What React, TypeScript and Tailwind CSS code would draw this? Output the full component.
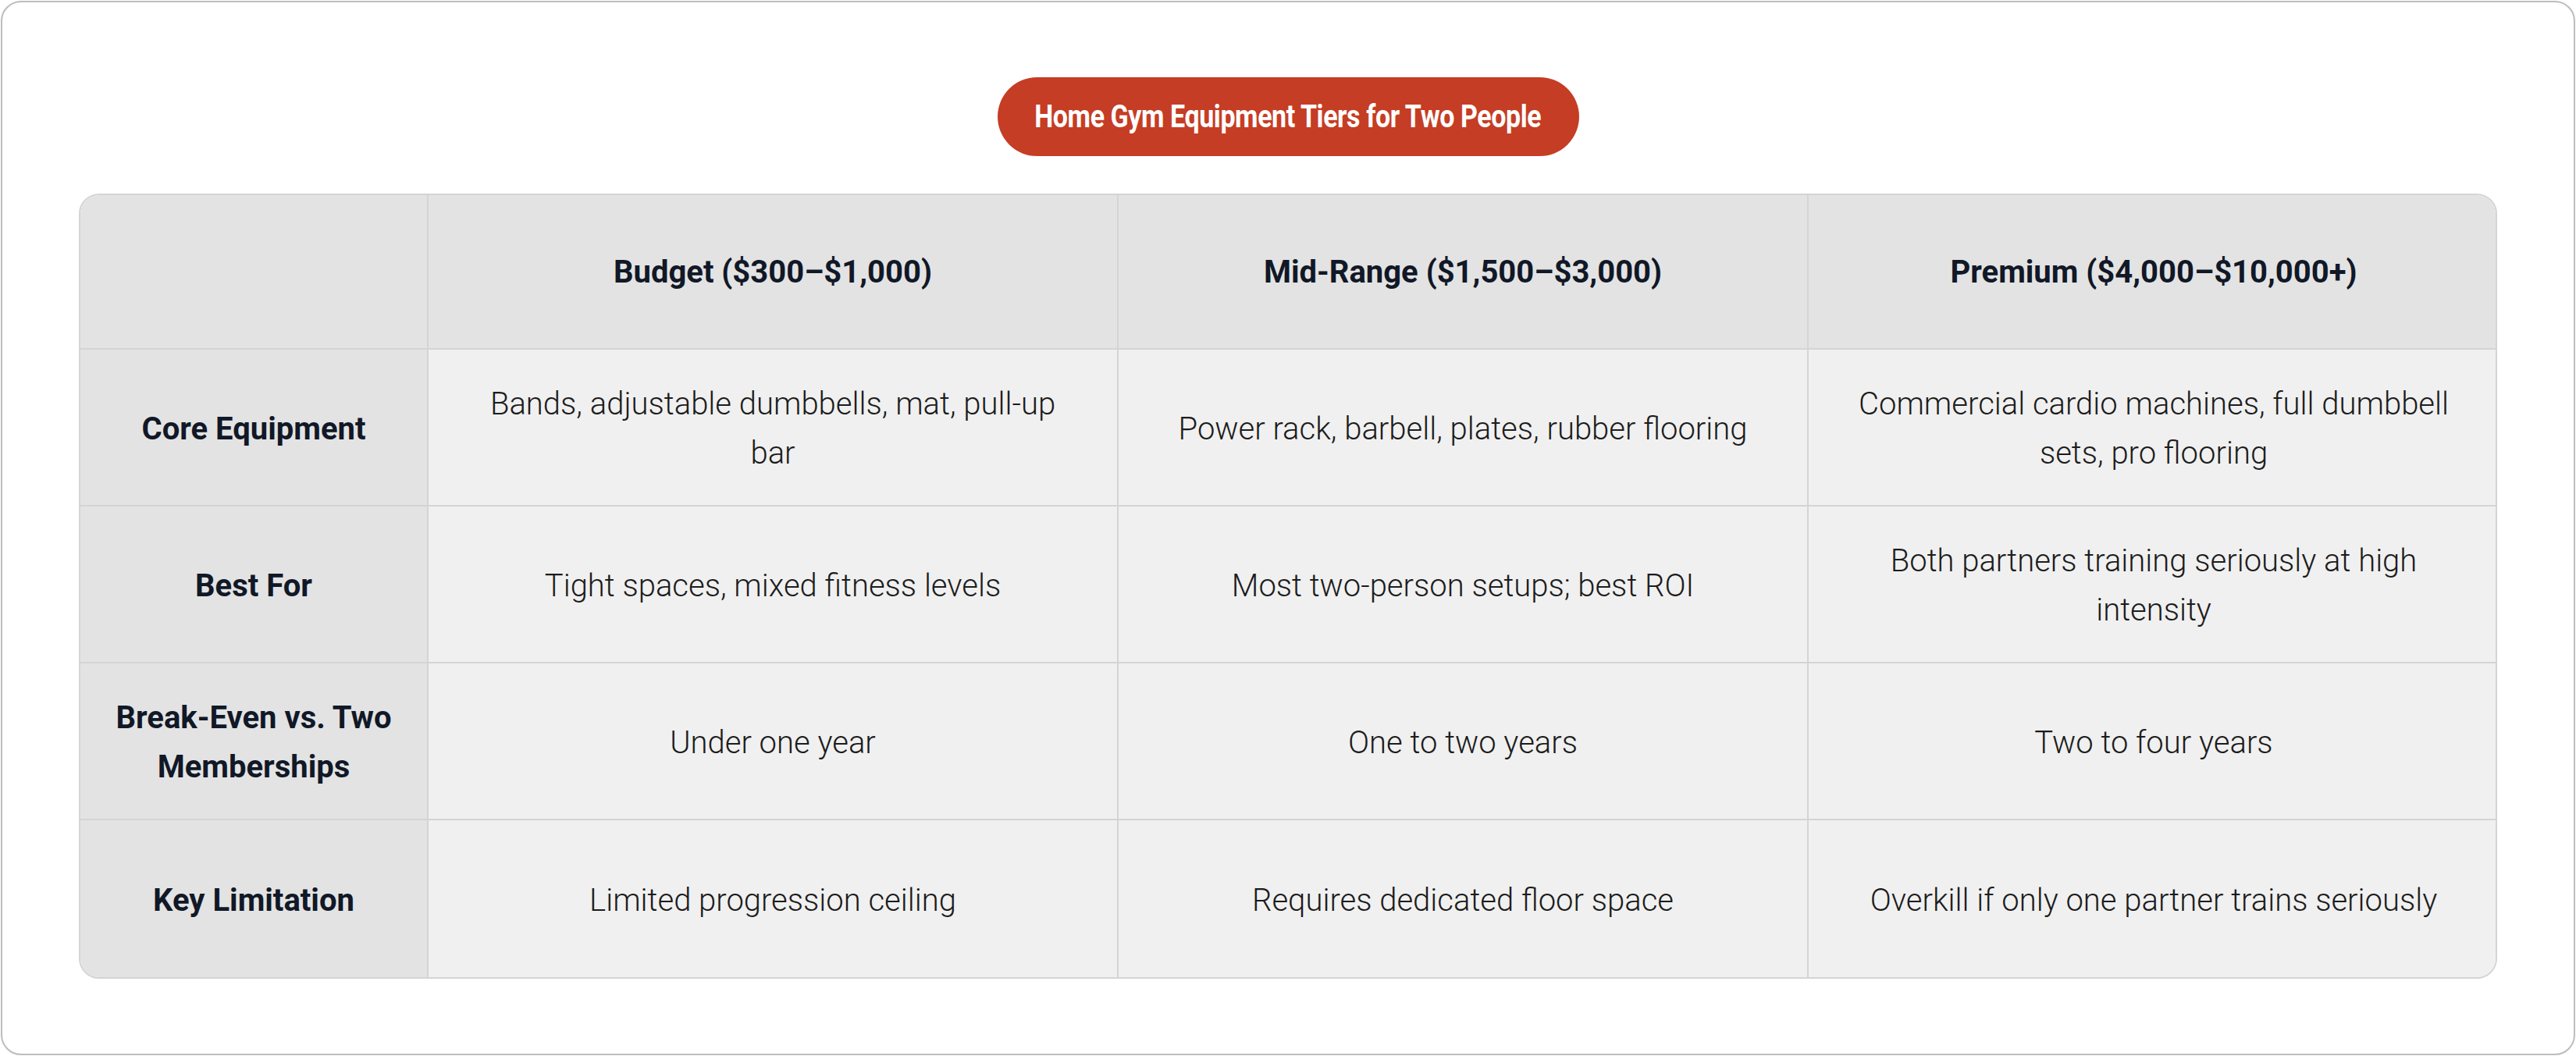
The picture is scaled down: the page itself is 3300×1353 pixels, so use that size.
const headers = ['Budget ($300–$1,000)', 'Mid-Range ($1,500–$3,000)', 'Premium ($4,000–$10,000+)'];

const rows: { label: string; cells: string[] }[] = [
  {
    label: 'Core Equipment',
    cells: [
      'Bands, adjustable dumbbells, mat, pull-up bar',
      'Power rack, barbell, plates, rubber flooring',
      'Commercial cardio machines, full dumbbell sets, pro flooring',
    ],
  },
  {
    label: 'Best For',
    cells: [
      'Tight spaces, mixed fitness levels',
      'Most two-person setups; best ROI',
      'Both partners training seriously at high intensity',
    ],
  },
  {
    label: 'Break-Even vs. Two Memberships',
    cells: ['Under one year', 'One to two years', 'Two to four years'],
  },
  {
    label: 'Key Limitation',
    cells: [
      'Limited progression ceiling',
      'Requires dedicated floor space',
      'Overkill if only one partner trains seriously',
    ],
  },
];

export default function App() {
  return (
    <div className="w-[3300px] h-[1353px] bg-white p-px font-['Roboto',sans-serif]">
      <div className="h-full rounded-[26px] border-2 border-[#bdbdc0] bg-white px-[98px] pt-[96px]">
        <div className="flex justify-center">
          <div className="flex h-[101px] w-[745px] items-center justify-center rounded-full bg-[#c53d24] text-white">
            <span className="inline-block scale-x-[0.85] whitespace-nowrap text-[40px] font-bold tracking-[-0.5px]">
              Home Gym Equipment Tiers for Two People
            </span>
          </div>
        </div>

        <div className="mt-[48px] grid grid-cols-[446px_884px_884px_884px] overflow-hidden rounded-[26px] border-2 border-[#d4d4d4]">
          <div className="h-[198px] border-r-2 border-b-2 border-[#d4d4d4] bg-[#e3e3e3]" />
          {headers.map((h, i) => (
            <div
              key={h}
              className={`flex h-[198px] items-center justify-center border-b-2 border-[#d4d4d4] bg-[#e3e3e3] px-[40px] pt-[2px] text-center text-[40px] font-bold text-[#111827] ${i < 2 ? 'border-r-2' : ''}`}
            >
              {h}
            </div>
          ))}
          {rows.map((row, r) => (
            <div key={row.label} className="contents">
              <div
                className={`flex h-[201px] items-center justify-center border-r-2 border-[#d4d4d4] bg-[#e3e3e3] px-[36px] pt-[3px] text-center text-[40px] font-bold leading-[63px] text-[#111827] ${r < rows.length - 1 ? 'border-b-2' : ''}`}
              >
                {row.label}
              </div>
              {row.cells.map((c, i) => (
                <div
                  key={i}
                  className={`flex h-[201px] items-center justify-center border-[#d4d4d4] bg-[#f0f0f0] px-[48px] pt-[3px] text-center text-[40px] font-light leading-[63px] text-[#1c1c1c] ${i < 2 ? 'border-r-2' : ''} ${r < rows.length - 1 ? 'border-b-2' : ''}`}
                >
                  {c}
                </div>
              ))}
            </div>
          ))}
        </div>
      </div>
    </div>
  );
}
